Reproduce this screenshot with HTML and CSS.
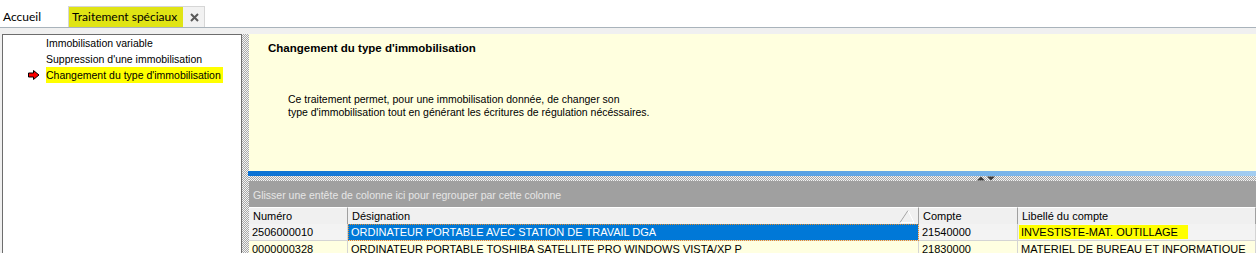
FILE: index.html
```html
<!DOCTYPE html>
<html lang="fr">
<head>
    <meta charset="UTF-8">
    <title>Traitement spéciaux</title>
    <link rel="stylesheet" href="styles.css">
</head>
<body>
    <div class="tabbar">
        <span class="tab-home">Accueil</span>
        <div class="tab active">
            <span class="tab-mark">Traitement spéciaux</span>
            <svg class="close" width="9" height="9" viewBox="0 0 9 9">
                <path d="M1 1L8 8M8 1L1 8" stroke="#5a5a5a" stroke-width="2"/>
            </svg>
        </div>
    </div>

    <div class="main">
        <div class="menu">
            <ul>
                <li>Immobilisation variable</li>
                <li>Suppression d'une immobilisation</li>
                <li class="current">
                    <svg class="arrow" width="12" height="10" viewBox="0 0 12 10">
                        <polygon points="0.5,3 5.5,3 5.5,0.5 11,5 5.5,9.5 5.5,7 0.5,7" fill="#ff0000" stroke="#000" stroke-width="1"/>
                    </svg>
                    <span class="mark">Changement du type d'immobilisation</span>
                </li>
            </ul>
        </div>
        <div class="vsplit"></div>
        <div class="content">
            <div class="info">
                <h2>Changement du type d'immobilisation</h2>
                <p>Ce traitement permet, pour une immobilisation donnée, de changer son<br>type d'immobilisation tout en générant les écritures de régulation nécéssaires.</p>
            </div>
            <div class="progress"></div>
            <div class="hsplit">
                <svg class="grip" width="20" height="5" viewBox="0 0 20 5">
                    <path d="M1 4.5L5 0.5L9 4.5Z" fill="#3c3c3c"/>
                    <path d="M11 0.5L19 0.5L15 4.5Z" fill="#3c3c3c"/>
                </svg>
            </div>
            <div class="groupby">Glisser une entête de colonne ici pour regrouper par cette colonne</div>
            <div class="grid">
                <div class="hcell">Numéro</div>
                <div class="hcell sorted">Désignation
                    <svg class="sort" width="16" height="13" viewBox="0 0 16 13">
                        <path d="M1 12.5L9 0.5L15 12.5Z" fill="none" stroke="#fff" stroke-width="1"/>
                        <path d="M1 12.5L9 0.5" stroke="#a0a0a0" stroke-width="1"/>
                    </svg>
                </div>
                <div class="hcell">Compte</div>
                <div class="hcell">Libellé du compte</div>

                <div class="cell focus-row">2506000010</div>
                <div class="cell selected">ORDINATEUR PORTABLE AVEC STATION DE TRAVAIL DGA</div>
                <div class="cell focus-row">21540000</div>
                <div class="cell focus-row"><span class="mark">INVESTISTE-MAT. OUTILLAGE</span></div>

                <div class="cell">0000000328</div>
                <div class="cell">ORDINATEUR PORTABLE TOSHIBA SATELLITE PRO WINDOWS VISTA/XP P</div>
                <div class="cell">21830000</div>
                <div class="cell">MATERIEL DE BUREAU ET INFORMATIQUE</div>
            </div>
        </div>
    </div>
</body>
</html>
```

FILE: styles.css
```css
body {
    margin: 0;
    width: 1256px;
    height: 253px;
    overflow: hidden;
    background: #fff;
    font-family: "Liberation Sans", Arial, sans-serif;
    font-size: 11px;
    color: #000;
}
.tabbar {
    display: flex;
    align-items: flex-end;
    height: 27px;
    border-bottom: 1px solid #a9b3bb;
    font-family: Lato, "Liberation Sans", sans-serif;
    font-size: 12px;
    white-space: nowrap;
}
.tab-home {
    padding: 0 0 3px 3px;
    width: 62px;
}
.tab {
    display: flex;
    align-items: center;
    height: 21px;
    width: 137px;
    margin-left: 3px;
    box-sizing: border-box;
    border: 1px solid #d6d6d6;
    border-bottom: none;
    background: #f2f2f2;
}
.tab-mark {
    background: #e0e414;
    padding: 2px 6px 3px 3px;
}
.close {
    margin-left: auto;
    margin-right: 5px;
}
.main {
    display: flex;
    height: 225px;
    padding-top: 6px;
    background: #f0f0f0;
}
.menu {
    width: 240px;
    margin-left: 2px;
    box-sizing: border-box;
    border: 1px solid #6d6d6d;
    background: #fff;
    font-size: 10.5px;
}
.menu ul {
    list-style: none;
    margin: 0;
    padding: 0;
}
.menu li {
    display: flex;
    align-items: center;
    height: 16px;
    padding-left: 43px;
    position: relative;
}
.menu li.current .mark {
    background: #ffff00;
    padding: 2px 2px 2px 0;
}
.menu .arrow {
    position: absolute;
    left: 25px;
    top: 3px;
}
.vsplit,
.hsplit {
    background: repeating-conic-gradient(#a8a8a8 0 25%, #f4f4f4 0 50%) 0 0 / 2px 2px;
}
.vsplit {
    width: 7px;
}
.content {
    flex: 1;
    display: flex;
    flex-direction: column;
    min-width: 0;
}
.info {
    height: 137px;
    background: #ffffdf;
    padding: 8px 0 0 19px;
    box-sizing: border-box;
}
.info h2 {
    margin: 0;
    font-size: 11.5px;
    font-weight: bold;
}
.info p {
    margin: 39px 0 0 20px;
    line-height: 13px;
    font-size: 10.5px;
}
.progress {
    height: 5px;
    margin-left: -1px;
    background: linear-gradient(to right, #0a72d4, #3e93e0 40%, #a3cdf1);
}
.hsplit {
    height: 5px;
    position: relative;
}
.grip {
    position: absolute;
    left: 727px;
    top: 0;
}
.groupby {
    height: 26px;
    line-height: 28px;
    background: #a0a0a0;
    color: #e6e6e6;
    padding-left: 4px;
    font-size: 10.5px;
}
.grid {
    display: grid;
    grid-template-columns: 99px 571px 99px 1fr;
    grid-auto-rows: 17px;
    background: #ffffe1;
}
.hcell {
    background: #f0f0f0;
    border-top: 1px solid #fff;
    border-right: 1px solid #a0a0a0;
    padding-left: 4px;
    line-height: 17px;
    position: relative;
}
.hcell.sorted .sort {
    position: absolute;
    right: 3px;
    top: 2px;
}
.cell {
    border-right: 1px solid #d4d4d4;
    border-bottom: 1px solid #d4d4d4;
    padding-left: 3px;
    line-height: 17px;
    white-space: nowrap;
    overflow: hidden;
    font-size: 11px;
}
.cell.focus-row {
    background: #f3f3f3;
}
.cell.selected {
    background: #0078d7;
    color: #fff;
    outline: 1px dotted #e08a2c;
    outline-offset: -1px;
}
.cell .mark {
    background: #ffff00;
    padding: 1px 10px 1px 2px;
    margin-left: -2px;
}
```
